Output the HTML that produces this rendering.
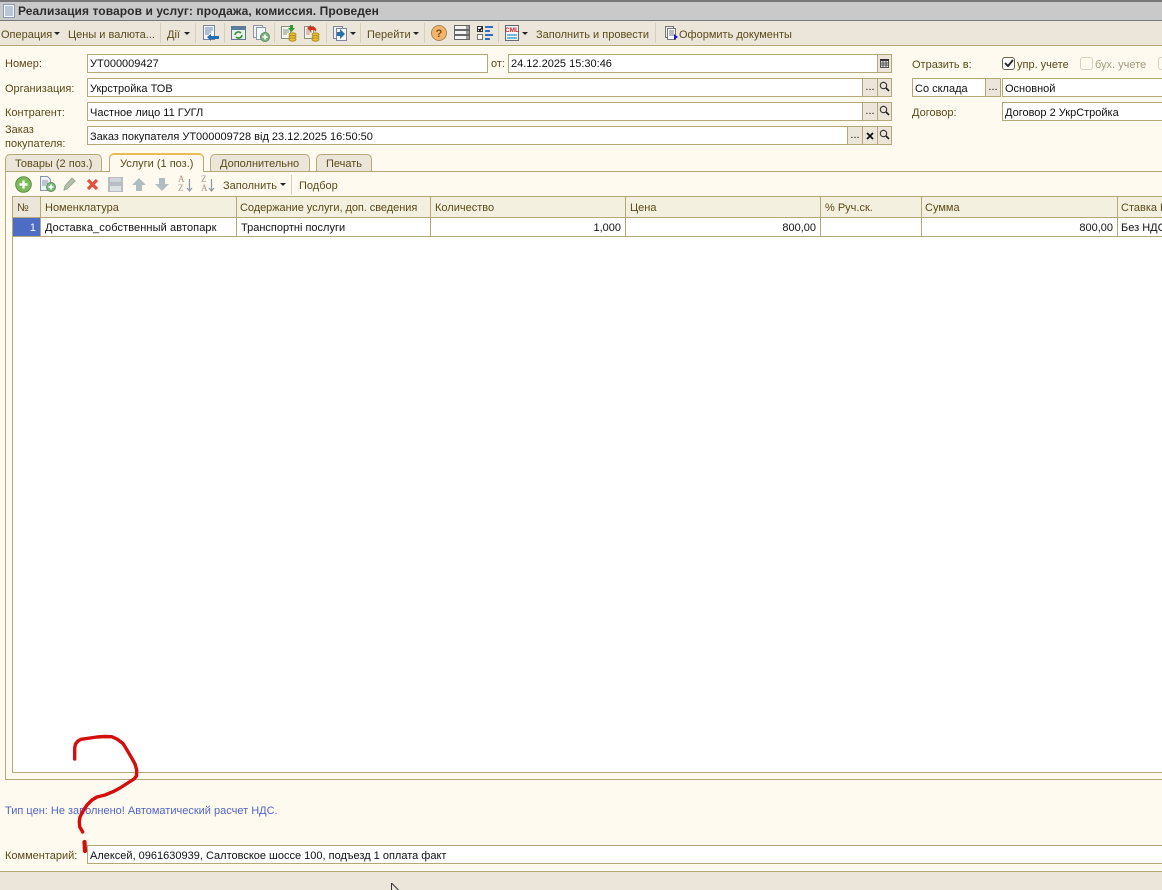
<!DOCTYPE html>
<html lang="ru"><head><meta charset="utf-8"><title>Реализация</title>
<style>
html,body{margin:0;padding:0}
body{width:1162px;height:890px;overflow:hidden;position:relative;background:#fffaf0;font:11px/16px "Liberation Sans",sans-serif;color:#4d3f14}
div,span,svg{position:absolute;white-space:nowrap;box-sizing:border-box}
.t{color:#5a4a1a}
.in{background:#fff;border:1px solid #b5a878;color:#111;padding:2px 0 0 2px;height:19px}
.btn{background:#ece6da;border:1px solid #b5a878;color:#111;height:19px;width:16px;text-align:center;line-height:17px}
.sep{width:1px;height:20px;top:23px;background:#d6cfb9}
.tab{top:154px;height:18px;background:#ece6da;border:1px solid #b5a878;border-bottom:none;border-radius:5px 5px 0 0;padding:1px 0 0 9px;color:#5a4a1a}
.hd{top:196px;height:22px;background:#f4f0df;border:1px solid #b5a878;border-left:none;padding:3px 0 0 4px;color:#5a4a1a}
.c{top:218px;height:19px;background:#fff;border-right:1px solid #b5a878;border-bottom:1px solid #b5a878;padding:2px 4px 0 4px;color:#111}
</style></head><body>
<div style="left:0;top:0;width:1162px;height:21px;background:#c9c9c9;border-top:2px solid #777;border-bottom:1px solid #777"></div>
<svg style="left:3px;top:4px" width="12" height="14" viewBox="0 0 12 14"><rect x=".5" y=".5" width="11" height="13" fill="#f4f7fb" stroke="#8a9ab0"/><path d="M2 3h8M2 5h8M2 7h8M2 9h8M2 11h8" stroke="#7f93b5"/></svg>
<div style="left:18px;top:3px;font-weight:bold;font-size:12px;color:#2c2c2c;letter-spacing:.08px">Реализация товаров и услуг: продажа, комиссия. Проведен</div>
<div style="left:0;top:21px;width:1162px;height:25px;background:#ece6da;border-bottom:1px solid #b5a878"></div>

<div class="t" style="left:1px;top:27px">Операция</div>
<svg style="left:54px;top:32px" width="6" height="4"><path d="M0 0h6L3 3z" fill="#222"/></svg>
<div class="t" style="left:68px;top:27px">Цены и валюта...</div>
<div class="sep" style="left:160px"></div>
<div class="t" style="left:167px;top:27px">Дії</div>
<svg style="left:184px;top:32px" width="6" height="4"><path d="M0 0h6L3 3z" fill="#222"/></svg>
<div class="sep" style="left:195px"></div>
<svg style="left:202px;top:25px" width="17" height="17" viewBox="0 0 17 17"><rect x="1.500" y=".5" width="11" height="14" fill="#f3f6fb" stroke="#6f86a8"/><path d="M3 3h8M3 5h8M3 7h6M3 9h4" stroke="#6f86a8"/><path d="M5 12l4-3v2h8v3H9v2z" fill="#1f6db3"/></svg>
<div class="sep" style="left:224px"></div>
<svg style="left:231px;top:26px" width="15" height="15" viewBox="0 0 15 15"><rect x=".5" y=".5" width="14" height="13" fill="#e8f0ea" stroke="#5f7a8f"/><rect x="1" y="1" width="13" height="3" fill="#5a7f9c"/><path d="M4 9a3.500 3.500 0 0 1 6-2M11 9a3.500 3.500 0 0 1-6 2" fill="none" stroke="#2f8a35" stroke-width="1.500"/></svg>
<svg style="left:253px;top:25px" width="17" height="17" viewBox="0 0 17 17"><rect x=".5" y=".5" width="9" height="12" fill="#eef1f6" stroke="#8a97aa"/><rect x="3.500" y="2.500" width="9" height="12" fill="#f6f8fb" stroke="#8a97aa"/><circle cx="12" cy="12" r="4.500" fill="#7fb37f" stroke="#5b8f5b"/><path d="M12 9.500v5M9.500 12h5" stroke="#fff" stroke-width="1.600"/></svg>
<div class="sep" style="left:274px"></div>
<svg style="left:281px;top:25px" width="16" height="17" viewBox="0 0 16 17"><rect x=".5" y="1.500" width="9" height="12" fill="#f5f6f0" stroke="#8a8f80"/><path d="M2 5h6M2 7h6M2 9h4" stroke="#8a8f80"/><path d="M9 0h3v3h2l-3.500 4L7 3h2z" fill="#2e9a32"/><ellipse cx="11.500" cy="9.500" rx="3.500" ry="1.600" fill="#e8c33a" stroke="#b58f1c"/><ellipse cx="11.500" cy="12" rx="3.500" ry="1.600" fill="#e8c33a" stroke="#b58f1c"/><ellipse cx="11.500" cy="14.500" rx="3.500" ry="1.600" fill="#e8c33a" stroke="#b58f1c"/></svg>
<svg style="left:304px;top:25px" width="16" height="17" viewBox="0 0 16 17"><rect x=".5" y="1.500" width="9" height="12" fill="#f5f6f0" stroke="#8a8f80"/><path d="M2 5h6M2 7h6M2 9h4" stroke="#c08a80"/><path d="M3 3l4-3v2h3q3 1 2 5-1-2-3-2H7v2z" fill="#d42f1f"/><ellipse cx="11.500" cy="9.500" rx="3.500" ry="1.600" fill="#e8c33a" stroke="#b58f1c"/><ellipse cx="11.500" cy="12" rx="3.500" ry="1.600" fill="#e8c33a" stroke="#b58f1c"/><ellipse cx="11.500" cy="14.500" rx="3.500" ry="1.600" fill="#e8c33a" stroke="#b58f1c"/></svg>
<div class="sep" style="left:326px"></div>
<svg style="left:333px;top:26px" width="15" height="15" viewBox="0 0 15 15"><rect x=".5" y=".5" width="9" height="12" fill="#eef1f6" stroke="#7a8798"/><rect x="3.500" y="2.500" width="10" height="12" fill="#f6f8fb" stroke="#7a8798"/><path d="M4 6h3V3l5 5-5 5v-3H4z" fill="#2a6fa8"/></svg>
<svg style="left:350px;top:32px" width="6" height="4"><path d="M0 0h6L3 3z" fill="#222"/></svg>
<div class="sep" style="left:360px"></div>
<div class="t" style="left:367px;top:27px">Перейти</div>
<svg style="left:413px;top:32px" width="6" height="4"><path d="M0 0h6L3 3z" fill="#222"/></svg>
<div class="sep" style="left:424px"></div>
<svg style="left:431px;top:25px" width="16" height="16" viewBox="0 0 16 16"><circle cx="8" cy="8" r="7.500" fill="#f3b469" stroke="#a8875c"/><text x="8" y="12" font-size="11" font-weight="bold" text-anchor="middle" fill="#7a4d15" font-family="Liberation Sans">?</text></svg>
<svg style="left:454px;top:25px" width="16" height="16" viewBox="0 0 16 16"><path d="M.5.5h15v4H.5zM.5 5.500h15v4H.5zM.5 10.500h15v4H.5z" fill="#f3f3f3" stroke="#666"/><path d="M12 1h3v3h-3zM12 6h3v3h-3zM12 11h3v3h-3z" fill="#999"/></svg>
<svg style="left:477px;top:25px" width="17" height="16" viewBox="0 0 17 16"><rect x=".5" y="1.500" width="5" height="5" fill="#fff" stroke="#333"/><path d="M1.500 4l1.500 1.500L5 2.500" fill="none" stroke="#000" stroke-width="1.300"/><rect x=".5" y="9.500" width="5" height="5" fill="#fff" stroke="#777"/><path d="M8 1h8v2H8zM8 5h5v2H8zM8 9h8v2H8zM8 13h5v2H8z" fill="#2f6fc4"/></svg>
<div class="sep" style="left:498px"></div>
<svg style="left:505px;top:25px" width="14" height="17" viewBox="0 0 14 17"><rect x=".5" y=".5" width="13" height="15" fill="#f4f8fc" stroke="#667"/><text x="7" y="7" font-size="6.500" font-weight="bold" text-anchor="middle" fill="#d21f1f" font-family="Liberation Sans">CML</text><path d="M2 10h10M2 13h10" stroke="#2f8fc4" stroke-width="1.200"/></svg>
<svg style="left:522px;top:32px" width="6" height="4"><path d="M0 0h6L3 3z" fill="#222"/></svg>
<div class="t" style="left:536px;top:27px">Заполнить и провести</div>
<div class="sep" style="left:655px"></div>
<svg style="left:665px;top:26px" width="13" height="15" viewBox="0 0 13 15"><rect x=".5" y=".5" width="8" height="11" fill="#f2f2f2" stroke="#777"/><rect x="2.500" y="2.500" width="8" height="11" fill="#fff" stroke="#777"/><path d="M4 5h5M4 7h5M4 9h5" stroke="#777"/><path d="M9 8l4 3-4 3z" fill="#1a1acc"/></svg>
<div class="t" style="left:679px;top:27px">Оформить документы</div>

<div class="t" style="left:5px;top:56px">Номер:</div>
<div class="in" style="left:87px;top:54px;width:401px;padding-top:1px">УТ000009427</div>
<div class="t" style="left:491px;top:56px">от:</div>
<div class="in" style="left:508px;top:54px;width:370px;padding-top:1px">24.12.2025 15:30:46</div>
<div class="btn" style="left:877px;top:54px;width:15px"></div>
<svg style="left:880px;top:59px" width="9" height="9" viewBox="0 0 9 9"><path d="M.5 1.500h8v7h-8zM.5 4h8M.5 6h8M3 2v6M6 2v6" fill="none" stroke="#555"/><path d="M0 0h9v2H0z" fill="#333"/></svg>

<div class="t" style="left:5px;top:81px">Организация:</div>
<div class="in" style="left:87px;top:78px;width:776px">Укрстройка ТОВ</div>
<div class="btn" style="left:862px;top:78px">...</div><div class="btn" style="left:877px;top:78px;width:15px"></div>
<div class="t" style="left:5px;top:105px">Контрагент:</div>
<div class="in" style="left:87px;top:102px;width:776px">Частное лицо 11 ГУГЛ</div>
<div class="btn" style="left:862px;top:102px">...</div><div class="btn" style="left:877px;top:102px;width:15px"></div>
<div class="t" style="left:5px;top:124px;line-height:13.500px">Заказ<br>покупателя:</div>
<div class="in" style="left:87px;top:126px;width:761px">Заказ покупателя УТ000009728 від 23.12.2025 16:50:50</div>
<div class="btn" style="left:847px;top:126px">...</div><div class="btn" style="left:862px;top:126px"></div><div class="btn" style="left:877px;top:126px;width:15px"></div>
<svg style="left:866px;top:132px" width="8" height="8"><path d="M1 1l6 6M7 1l-6 6" stroke="#111" stroke-width="1.800"/></svg>
<svg style="left:879px;top:81px" width="11" height="12" viewBox="0 0 11 12"><circle cx="4.500" cy="4.500" r="3.200" fill="none" stroke="#333" stroke-width="1.100"/><path d="M7 7l3 3" stroke="#222" stroke-width="1.700"/></svg>
<svg style="left:879px;top:105px" width="11" height="12" viewBox="0 0 11 12"><circle cx="4.500" cy="4.500" r="3.200" fill="none" stroke="#333" stroke-width="1.100"/><path d="M7 7l3 3" stroke="#222" stroke-width="1.700"/></svg>
<svg style="left:879px;top:129px" width="11" height="12" viewBox="0 0 11 12"><circle cx="4.500" cy="4.500" r="3.200" fill="none" stroke="#333" stroke-width="1.100"/><path d="M7 7l3 3" stroke="#222" stroke-width="1.700"/></svg>

<div class="t" style="left:912px;top:57px">Отразить в:</div>
<div style="left:1002px;top:57px;width:13px;height:13px;background:#fff;border:1px solid #6e6346;border-radius:3px"></div>
<svg style="left:1004px;top:59px" width="10" height="9"><path d="M1 4l3 3 5-6" fill="none" stroke="#222" stroke-width="1.800"/></svg>
<div class="t" style="left:1017px;top:57px">упр. учете</div>
<div style="left:1080px;top:57px;width:13px;height:13px;background:#fffaf0;border:1px solid #d8d0bb;border-radius:3px"></div>
<div style="left:1095px;top:57px;color:#a39a80">бух. учете</div>
<div style="left:1158px;top:57px;width:13px;height:13px;background:#fffaf0;border:1px solid #d8d0bb;border-radius:3px"></div>
<div class="in" style="left:912px;top:78px;width:74px">Со склада</div>
<div class="btn" style="left:985px;top:78px">...</div>
<div class="in" style="left:1002px;top:78px;width:170px">Основной</div>
<div class="t" style="left:912px;top:105px">Договор:</div>
<div class="in" style="left:1002px;top:102px;width:170px">Договор 2 УкрСтройка</div>

<div class="tab" style="left:5px;width:97px">Товары (2 поз.)</div>
<div class="tab" style="left:210px;width:100px">Дополнительно</div>
<div class="tab" style="left:316px;width:56px">Печать</div>
<div style="left:5px;top:171px;width:1170px;height:609px;border:1px solid #b5a878;background:#fffaf0"></div>
<div class="tab" style="left:109px;top:153px;width:95px;height:19px;padding-left:10px;background:#fffaf0;border-top:2px solid #e8bd55;z-index:2">Услуги (1 поз.)</div>

<svg style="left:15px;top:176px" width="17" height="17" viewBox="0 0 17 17"><circle cx="8.500" cy="8.500" r="7.800" fill="#7fb95c" stroke="#5c8f49"/><path d="M8.500 4.500v8M4.500 8.500h8" stroke="#fff" stroke-width="2.400"/></svg>
<svg style="left:40px;top:176px" width="16" height="16" viewBox="0 0 16 16"><path d="M.5.5h7l3 3v11H.5z" fill="#eef2f6" stroke="#8a97aa"/><path d="M2 5h6M2 7h6M2 9h4" stroke="#8a97aa"/><circle cx="11" cy="11" r="4.500" fill="#7fb97f" stroke="#5b8f5b"/><path d="M11 8.500v5M8.500 11h5" stroke="#fff" stroke-width="1.600"/></svg>
<svg style="left:63px;top:177px" width="13" height="14" viewBox="0 0 13 14"><path d="M9 1l3 3-8 8-3 1 1-4z" fill="#b3c0ac" stroke="#9aa893"/></svg>
<svg style="left:86px;top:178px" width="13" height="13" viewBox="0 0 13 13"><path d="M2 2l9 9M11 2l-9 9" stroke="#e2503f" stroke-width="3.200"/></svg>
<svg style="left:108px;top:177px" width="15" height="15" viewBox="0 0 15 15"><rect width="15" height="15" fill="#b7bdc3"/><path d="M2 1h11v4H2z" fill="#cfd4d8"/><path d="M2 9h11v5H2z" fill="#dfe2e4"/></svg>
<svg style="left:132px;top:178px" width="14" height="13" viewBox="0 0 14 13"><path d="M7 0l7 7h-4v6H4V7H0z" fill="#b0bcc2"/></svg>
<svg style="left:155px;top:178px" width="14" height="13" viewBox="0 0 14 13"><path d="M7 13L0 6h4V0h6v6h4z" fill="#b0bcc2"/></svg>
<div style="left:178px;top:175px;font:9px/9px 'Liberation Serif',serif;color:#a98f85;width:9px">A<br>Z</div>
<svg style="left:186px;top:179px" width="7" height="14"><path d="M3.500 0v12M1 9l2.500 3L6 9" fill="none" stroke="#8a9aa5" stroke-width="1.200"/></svg>
<div style="left:201px;top:175px;font:9px/9px 'Liberation Serif',serif;color:#a98f85;width:9px">Z<br>A</div>
<svg style="left:208px;top:179px" width="7" height="14"><path d="M3.500 0v12M1 9l2.500 3L6 9" fill="none" stroke="#8a9aa5" stroke-width="1.200"/></svg>
<div class="t" style="left:223px;top:178px">Заполнить</div>
<svg style="left:280px;top:183px" width="6" height="4"><path d="M0 0h6L3 3z" fill="#222"/></svg>
<div class="sep" style="left:291px;top:175px"></div>
<div class="t" style="left:299px;top:178px">Подбор</div>

<div style="left:12px;top:196px;width:1160px;height:577px;border:1px solid #b5a878;background:#fff"></div>
<div class="hd" style="left:12px;width:29px;border-left:1px solid #b5a878;background:#ece6da">№</div>
<div class="hd" style="left:41px;width:196px">Номенклатура</div>
<div class="hd" style="left:237px;width:194px;padding-left:3px;letter-spacing:-.05px">Содержание услуги, доп. сведения</div>
<div class="hd" style="left:431px;width:195px">Количество</div>
<div class="hd" style="left:626px;width:195px">Цена</div>
<div class="hd" style="left:821px;width:101px">% Руч.ск.</div>
<div class="hd" style="left:922px;width:196px;padding-left:3px">Сумма</div>
<div class="hd" style="left:1118px;width:60px;padding-left:3px">Ставка НДС</div>
<div class="c" style="left:13px;width:28px;background:#4f6cc4;color:#fff;text-align:right">1</div>
<div class="c" style="left:41px;width:196px;letter-spacing:.1px">Доставка_собственный автопарк</div>
<div class="c" style="left:237px;width:194px">Транспортні послуги</div>
<div class="c" style="left:431px;width:195px;text-align:right">1,000</div>
<div class="c" style="left:626px;width:195px;text-align:right">800,00</div>
<div class="c" style="left:821px;width:101px"></div>
<div class="c" style="left:922px;width:196px;text-align:right">800,00</div>
<div class="c" style="left:1118px;width:60px;padding-left:3px">Без НДС</div>

<div style="left:5px;top:803px;color:#5264c8">Тип цен: Не заполнено! Автоматический расчет НДС.</div>
<div class="t" style="left:5px;top:848px">Комментарий:</div>
<div class="in" style="left:87px;top:845px;width:1085px">Алексей, 0961630939, Салтовское шоссе 100, подъезд 1 оплата факт</div>

<div style="left:0;top:871px;width:1162px;height:19px;background:#ece6da;border-top:1px solid #b5a878"></div>
<svg style="left:391px;top:883px" width="9" height="7"><path d="M.5 0v7M.5 0l7 7" fill="#fff" stroke="#333"/></svg>

<svg style="left:0;top:0;z-index:5" width="1162" height="890"><polyline points="74.700,759 74.700,748 75.500,744 78,741 81,739.300 90,738 97,737 105,736.500 111.700,736.700 117,739 123,743.500 127,750 131.700,758 135,764 136.700,770 136.500,776 134,779 127,783.500 120,788 113,791.700 105,795 97,797 92,800 87,805 83,811 80,817 79.300,822 79.800,827 82.700,832" fill="none" stroke="#d40d0d" stroke-width="3.400" stroke-linecap="round" stroke-linejoin="round"/><path d="M84.500 842L85 851" stroke="#d40d0d" stroke-width="4.200" stroke-linecap="round"/></svg>
</body></html>
